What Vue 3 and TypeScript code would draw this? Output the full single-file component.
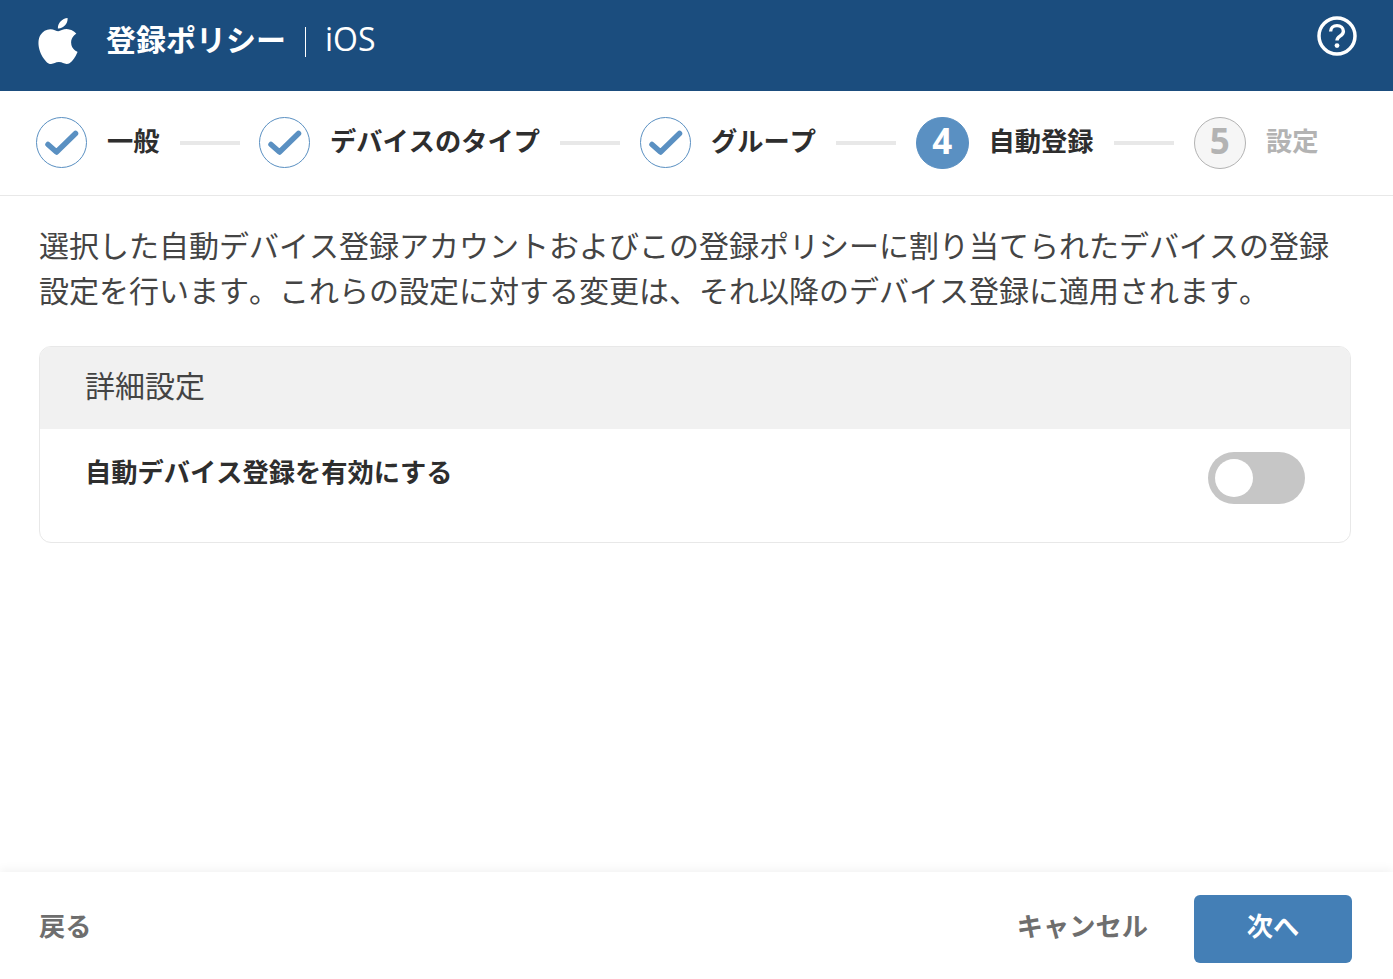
<script setup lang="ts">
interface Step { label: string; state: 'done' | 'active' | 'todo'; num: number }
const steps: Step[] = [
  { label: '一般', state: 'done', num: 1 },
  { label: 'デバイスのタイプ', state: 'done', num: 2 },
  { label: 'グループ', state: 'done', num: 3 },
  { label: '自動登録', state: 'active', num: 4 },
  { label: '設定', state: 'todo', num: 5 },
]
</script>

<template>
  <div class="page">
    <header class="top">
      <svg class="apple" viewBox="0 0 24 24" preserveAspectRatio="none" aria-hidden="true">
        <path fill="#fff" d="M12.152 6.896c-.948 0-2.415-1.078-3.96-1.04-2.04.027-3.91 1.183-4.961 3.014-2.117 3.675-.546 9.103 1.519 12.09 1.013 1.454 2.208 3.09 3.792 3.039 1.52-.065 2.09-.987 3.935-.987 1.831 0 2.35.987 3.96.948 1.637-.026 2.676-1.48 3.676-2.948 1.156-1.688 1.636-3.325 1.662-3.415-.039-.013-3.182-1.221-3.22-4.857-.026-3.04 2.48-4.494 2.597-4.559-1.429-2.09-3.623-2.324-4.39-2.376-2-.156-3.675 1.09-4.61 1.09zM15.53 3.83c.843-1.012 1.4-2.427 1.245-3.83-1.207.052-2.662.805-3.532 1.818-.78.896-1.454 2.338-1.273 3.714 1.338.104 2.715-.688 3.559-1.701"/>
      </svg>
      <span class="title">登録ポリシー</span>
      <span class="platform">iOS</span>
      <svg class="help" viewBox="0 0 40 40" aria-hidden="true">
        <circle cx="20" cy="20" r="18" fill="none" stroke="#fff" stroke-width="3.5"/>
        <path d="M13.6 15.6c0-3.6 2.8-6 6.4-6s6.4 2.4 6.4 5.6c0 2.6-1.6 3.8-3.4 5-1.8 1.2-3 2.2-3 4.4" fill="none" stroke="#fff" stroke-width="3.4"/>
        <circle cx="20" cy="29.6" r="2.4" fill="#fff"/>
      </svg>
    </header>

    <nav class="stepper">
      <template v-for="(s, i) in steps" :key="s.num">
        <span v-if="i > 0" class="line"></span>
        <div class="step" :class="s.state">
          <span class="dot">
            <svg v-if="s.state === 'done'" class="check" viewBox="0 0 34 26" aria-hidden="true">
              <path d="M3 14.5 L11.5 22 L30.5 3.5" fill="none" stroke="#5a90c2" stroke-width="5.5" stroke-linecap="round" stroke-linejoin="round"/>
            </svg>
            <span v-else class="num">{{ s.num }}</span>
          </span>
          <span class="label">{{ s.label }}</span>
        </div>
      </template>
    </nav>

    <main class="body">
      <p class="intro">選択した自動デバイス登録アカウントおよびこの登録ポリシーに割り当てられたデバイスの登録設定を行います。これらの設定に対する変更は、それ以降のデバイス登録に適用されます。</p>
      <section class="card">
        <h2 class="card-head">詳細設定</h2>
        <div class="card-row">
          <span class="row-label">自動デバイス登録を有効にする</span>
          <span class="toggle"><span class="knob"></span></span>
        </div>
      </section>
    </main>

    <footer class="foot">
      <button class="link" type="button">戻る</button>
      <div class="actions">
        <button class="link" type="button">キャンセル</button>
        <button class="next" type="button">次へ</button>
      </div>
    </footer>
  </div>
</template>

<style scoped>
.page {
  height: 979px;
  display: flex;
  flex-direction: column;
  background: #fff;
  color: #333;
  font-family: "Open Sans", "Noto Sans CJK JP", sans-serif;
  font-kerning: none;
  overflow: hidden;
}
.top {
  height: 91px;
  flex: none;
  background: #1b4d7e;
  color: #fff;
  display: flex;
  align-items: center;
  padding: 0 36px 0 34px;
  box-sizing: border-box;
}
.apple {
  width: 48px;
  height: 46px;
  margin-right: 24px;
  align-self: flex-start;
  margin-top: 18px;
}
.title {
  font-size: 30px;
  font-weight: 700;
  line-height: 40px;
  margin-bottom: 11px;
}
.platform {
  font-size: 32px;
  line-height: 24px;
  padding-bottom: 6px;
  margin-left: 19px;
  padding-left: 19px;
  border-left: 1px solid #fff;
  margin-bottom: 7px;
}
.help {
  width: 40px;
  height: 40px;
  margin-left: auto;
  margin-top: -20px;
}
.stepper {
  height: 105px;
  flex: none;
  box-sizing: border-box;
  border-bottom: 1px solid #e8e8e8;
  display: flex;
  align-items: center;
  padding: 0 0 0 36px;
}
.step {
  display: flex;
  align-items: center;
  gap: 20px;
}
.step:first-child + .line {
  margin-right: 19.5px;
}
.dot {
  width: 52.5px;
  height: 52.5px;
  box-sizing: border-box;
  border-radius: 50%;
  display: flex;
  align-items: center;
  justify-content: center;
  border: 1px solid #5a90c2;
  color: #5a90c2;
  flex: none;
}
.done .dot {
  width: 51px;
  height: 51px;
  margin-bottom: 1px;
}
.num {
  font-size: 35px;
  font-weight: 700;
  line-height: 40px;
  margin-bottom: 5px;
}
.check {
  width: 34px;
  height: 26px;
}
.active .dot {
  background: #5a90c2;
  color: #fff;
}
.todo .dot {
  background: #f6f6f6;
  border-color: #b3b3b3;
  color: #b3b3b3;
}
.label {
  font-size: 26.25px;
  font-weight: 700;
  line-height: 36px;
  color: #2e2e2e;
  margin-bottom: 5px;
}
.todo .label {
  color: #b3b3b3;
}
.line {
  width: 60px;
  height: 4px;
  background: #e8e8e8;
  margin: 0 20px;
}
.body {
  flex: 1;
  padding: 27px 42px 0 39px;
  min-height: 0;
}
.intro {
  margin: 0;
  font-size: 30px;
  line-height: 45px;
  color: #444;
}
.card {
  margin-top: 33px;
  border: 1px solid #e8e8e8;
  border-radius: 12px;
  overflow: hidden;
}
.card-head {
  margin: 0;
  height: 82px;
  box-sizing: border-box;
  background: #f1f1f1;
  padding: 0 45px 8px;
  display: flex;
  align-items: center;
  font-size: 30px;
  font-weight: 400;
  color: #444;
}
.card-row {
  height: 113px;
  padding: 23px 45px 0;
  box-sizing: border-box;
  display: flex;
  justify-content: space-between;
  align-items: flex-start;
}
.row-label {
  font-size: 26.25px;
  font-weight: 700;
  line-height: 40px;
  color: #2e2e2e;
}
.toggle {
  width: 97px;
  height: 52px;
  border-radius: 26px;
  background: #c6c6c6;
  padding: 7px;
  box-sizing: border-box;
}
.knob {
  display: block;
  width: 38px;
  height: 38px;
  border-radius: 50%;
  background: #fff;
}
.foot {
  height: 107px;
  flex: none;
  box-sizing: border-box;
  display: flex;
  align-items: center;
  justify-content: space-between;
  padding: 7px 41px 0 39px;
  background: #fff;
  box-shadow: 0 -2px 10px rgba(0, 0, 0, 0.06);
}
.actions {
  display: flex;
  align-items: center;
  gap: 46px;
}
.link, .next {
  font-family: inherit;
  font-size: 26.25px;
  font-weight: 700;
  font-kerning: none;
  border: 0;
  cursor: pointer;
}
.link {
  background: none;
  color: #6e6e6e;
  padding: 0 0 9px;
}
.next {
  width: 158px;
  height: 68px;
  padding: 0 0 8px;
  background: #447fb6;
  color: #fff;
  border-radius: 6px;
}
</style>
